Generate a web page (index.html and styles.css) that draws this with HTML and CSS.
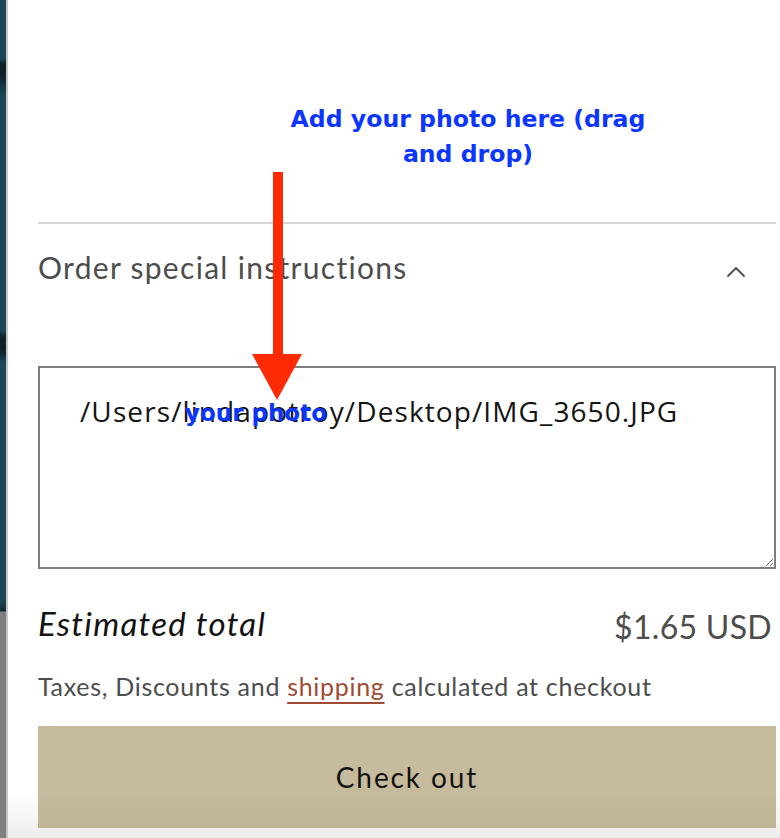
FILE: index.html
```html
<!DOCTYPE html>
<html lang="en">
<head>
<meta charset="utf-8">
<title>Cart drawer</title>
<link rel="stylesheet" href="styles.css">
</head>
<body>
<div class="frame">
  <div class="edge"></div>
  <main class="drawer">
    <div class="note-area">
      <p class="note">Add your photo here (drag<br>and drop)</p>
    </div>
    <section class="instructions">
      <div class="summary">
        <span class="summary-title">Order special instructions</span>
        <svg class="chevron" width="20" height="12" viewBox="0 0 20 12" aria-hidden="true">
          <path d="M1.5 10.5 L10 2 L18.5 10.5" fill="none" stroke="#4a4a4a" stroke-width="1.8"/>
        </svg>
      </div>
      <div class="field">
        <textarea class="note-input" spellcheck="false">/Users/lindapotroy/Desktop/IMG_3650.JPG</textarea>
        <span class="field-tag">your photo</span>
      </div>
    </section>
    <div class="totals">
      <h2 class="totals-label">Estimated total</h2>
      <p class="totals-value">$1.65 USD</p>
    </div>
    <p class="tax">Taxes, Discounts and <a href="#" class="tax-link">shipping</a> calculated at checkout</p>
    <button class="checkout" type="button">Check out</button>
  </main>
  <svg class="arrow" width="60" height="240" viewBox="0 0 60 240" aria-hidden="true">
    <rect x="23" y="2" width="10" height="184" fill="#fe2a03"/>
    <polygon points="2,184 52,184 27,230" fill="#fe2a03"/>
  </svg>
</div>
</body>
</html>
```
FILE: styles.css
```css
* { box-sizing: border-box; }

html, body {
  margin: 0;
  padding: 0;
  background: #ffffff;
}

.frame {
  position: relative;
  display: flex;
  width: 780px;
  height: 838px;
  overflow: hidden;
  background: linear-gradient(to bottom, #ffffff 0, #ffffff 790px, #f7f7f7 812px, #ececec 838px);
}

.edge {
  flex: 0 0 8px;
  border-right: 2px solid #c6c6c6;
  background:
    linear-gradient(to bottom,
      #1c4757 0, #1c4757 58px, #0c1f26 64px, #0c1f26 74px, #1c4757 96px,
      #1c4757 330px, #0d2128 338px, #0d2128 350px, #1c4757 362px,
      #1c4757 600px, #0f2a33 611px, #7f7f7f 612px, #7f7f7f 100%);
}

.drawer {
  flex: 1;
  display: flex;
  flex-direction: column;
  padding: 0 4px 0 30px;
  font-family: Lato, "Open Sans", sans-serif;
  color: #4d4d4d;
}

/* annotation */
.note-area {
  height: 222px;
  padding: 102px 0 0 210px;
}

.note {
  margin: 0;
  width: 440px;
  text-align: center;
  font-family: "DejaVu Sans", sans-serif;
  font-weight: bold;
  font-size: 23.6px;
  line-height: 35px;
  color: #0a36ff;
}

/* instructions */
.instructions {
  border-top: 2px solid #d6d6d6;
}

.summary {
  display: flex;
  justify-content: space-between;
  align-items: center;
  padding-top: 26px;
}

.summary-title {
  font-size: 30px;
  line-height: 35px;
  letter-spacing: 1.3px;
  color: #4d4d4d;
}

.chevron {
  margin: 9px 30px 0 0;
}

.field {
  position: relative;
  margin-top: 81px;
}

.note-input {
  display: block;
  width: 100%;
  height: 203px;
  margin: 0;
  padding: 24px 20px 0 40px;
  border: 2px solid #7e7e7e;
  border-radius: 0;
  outline: none;
  background: #ffffff;
  font-family: "Open Sans", sans-serif;
  font-size: 28px;
  line-height: 38px;
  letter-spacing: 1.1px;
  color: #141414;
  white-space: nowrap;
  overflow: hidden;
  resize: both;
}

.field-tag {
  position: absolute;
  left: 147px;
  top: 36px;
  font-family: "DejaVu Sans", sans-serif;
  font-weight: bold;
  font-size: 23px;
  line-height: 23px;
  color: #0a36ff;
  pointer-events: none;
}

/* totals */
.totals {
  display: flex;
  justify-content: space-between;
  align-items: flex-start;
  margin-top: 35px;
}

.totals-label {
  margin: 0;
  font-family: Lato, sans-serif;
  font-style: italic;
  font-weight: 400;
  font-size: 33px;
  line-height: 38px;
  letter-spacing: 1.3px;
  color: #121212;
}

.totals-value {
  margin: 0;
  padding: 4px 4px 0 0;
  font-size: 32px;
  line-height: 38px;
  letter-spacing: 0.3px;
  color: #4d4d4d;
}

.tax {
  margin: 25px 0 0;
  font-size: 25px;
  line-height: 30px;
  letter-spacing: 0.7px;
  color: #4d4d4d;
}

.tax-link {
  color: #9f4a35;
  text-decoration: underline;
  text-decoration-thickness: 2px;
  text-underline-offset: 6px;
}

.checkout {
  display: flex;
  align-items: center;
  justify-content: center;
  height: 102px;
  margin-top: 25px;
  border: 0;
  background: linear-gradient(to bottom, #c6bb9d 0, #c6bb9d 60%, #c0b596 100%);
  font-family: Lato, sans-serif;
  font-size: 28px;
  letter-spacing: 1.9px;
  color: #121212;
}

.arrow {
  position: absolute;
  left: 250px;
  top: 170px;
}
```
